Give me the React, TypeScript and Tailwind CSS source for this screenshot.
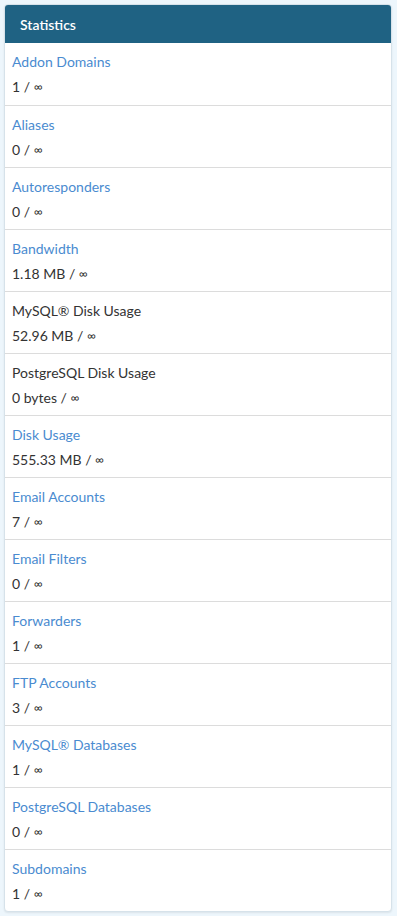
const rows: { label: string; value: string; link: boolean }[] = [
  { label: "Addon Domains", value: "1", link: true },
  { label: "Aliases", value: "0", link: true },
  { label: "Autoresponders", value: "0", link: true },
  { label: "Bandwidth", value: "1.18 MB", link: true },
  { label: "MySQL® Disk Usage", value: "52.96 MB", link: false },
  { label: "PostgreSQL Disk Usage", value: "0 bytes", link: false },
  { label: "Disk Usage", value: "555.33 MB", link: true },
  { label: "Email Accounts", value: "7", link: true },
  { label: "Email Filters", value: "0", link: true },
  { label: "Forwarders", value: "1", link: true },
  { label: "FTP Accounts", value: "3", link: true },
  { label: "MySQL® Databases", value: "1", link: true },
  { label: "PostgreSQL Databases", value: "0", link: true },
  { label: "Subdomains", value: "1", link: true },
];

export default function App() {
  return (
    <div
      className="min-h-[916px] bg-[#edf6fc] p-1"
      style={{ fontFamily: "Lato, 'Open Sans', sans-serif" }}
    >
      <div className="w-[388px] overflow-hidden rounded-[4px] border border-[#d6e2ea] bg-white shadow-[0_1px_2px_rgba(0,0,0,0.08)]">
        <div className="flex h-[38px] items-center bg-[#1f6283] px-[15px] text-[14px] font-semibold text-white">
          Statistics
        </div>
        {rows.map((r, i) => (
          <div
            key={r.label}
            className={`px-[7px] pt-2 ${i > 0 ? "border-t border-[#dcdcdc] pb-[5px]" : "pb-[6px]"}`}
          >
            <div
              className={`h-6 text-[14px] leading-[22px] ${
                r.link ? "text-[#4a8bd0]" : "text-[#333333]"
              }`}
            >
              {r.label}
            </div>
            <div className="h-6 text-[14px] leading-6 text-[#333333]">
              {r.value} / <span className="inline-block align-top text-[12px] leading-6">∞</span>
            </div>
          </div>
        ))}
      </div>
    </div>
  );
}
